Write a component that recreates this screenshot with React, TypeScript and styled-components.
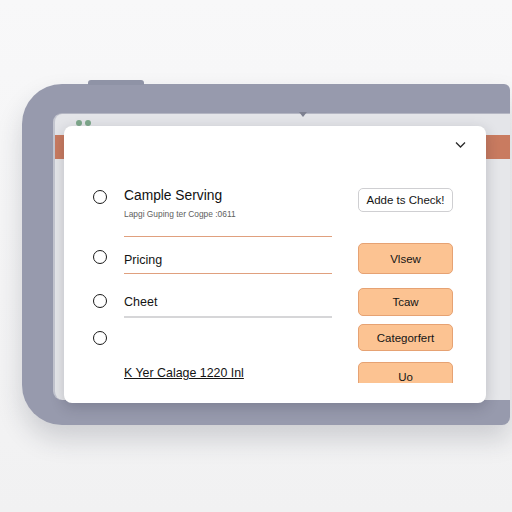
import styled, { createGlobalStyle } from 'styled-components';

const GlobalStyle = createGlobalStyle`
  html, body {
    margin: 0;
    padding: 0;
    background: #f5f5f6;
    font-family: 'Liberation Sans', Arial, sans-serif;
  }
`;

const Page = styled.div`
  width: 512px;
  height: 512px;
  padding: 84px 0 0 22px;
  box-sizing: border-box;
  overflow: hidden;
  background: linear-gradient(#f8f8f9, #f1f1f2);
`;

const Device = styled.div`
  position: relative;
  display: flex;
  width: 488px;
  height: 341px;
  box-sizing: border-box;
  padding: 29px 0 25px 31px;
  background: #979aad;
  border-radius: 40px 6px 8px 40px;
  box-shadow: 0 14px 26px rgba(40, 44, 60, 0.18);

  /* side button on the top edge */
  &::before {
    content: '';
    position: absolute;
    top: -4px;
    left: 66px;
    width: 56px;
    height: 5px;
    border-radius: 3px 3px 0 0;
    background: #8f93a6;
  }
`;

const Screen = styled.div`
  position: relative;
  flex: 1;
  display: flex;
  flex-direction: column;
  border-radius: 9px 0 0 9px;
  border-top: 1px solid #b4b6c3;
  border-left: 2px solid #c4c6d0;
  background: linear-gradient(
    to bottom,
    #e4e5e9 21px,
    #c97b60 21px,
    #c97b60 45px,
    #e6e7ea 45px
  );

  /* camera notch */
  &::before {
    content: '';
    position: absolute;
    top: -2px;
    left: 244px;
    border-left: 4px solid transparent;
    border-right: 4px solid transparent;
    border-top: 5px solid #7d8090;
  }
`;

const StatusDots = styled.div`
  display: flex;
  gap: 3px;
  height: 12px;
  box-sizing: border-box;
  padding: 6px 0 0 21px;
`;

const Dot = styled.span`
  width: 6px;
  height: 6px;
  border-radius: 50%;
  background: #7ea88b;
`;

const Card = styled.div`
  width: 422px;
  height: 277px;
  margin-left: 9px;
  box-sizing: border-box;
  background: #fff;
  border-radius: 8px;
  box-shadow: 0 4px 14px rgba(30, 34, 50, 0.22);
  padding-bottom: 20px;
`;

const Header = styled.div`
  display: flex;
  justify-content: flex-end;
  height: 62px;
  box-sizing: border-box;
  padding: 15px 20px 0 0;
`;

const Body = styled.div`
  height: 195px;
  overflow: hidden;
  padding-left: 29px;
`;

const Row = styled.div<{ $h: number; $gap: number }>`
  display: grid;
  grid-template-columns: 31px 234px 95px;
  height: ${(p) => p.$h}px;
  margin-top: ${(p) => p.$gap}px;
`;

const Radio = styled.span<{ $top: number }>`
  width: 14px;
  height: 14px;
  box-sizing: border-box;
  margin-top: ${(p) => p.$top}px;
  border: 1.6px solid #1a1a1a;
  border-radius: 50%;
`;

const Field = styled.div<{ $line?: 'orange' | 'grey'; $pad: number }>`
  width: 208px;
  box-sizing: border-box;
  padding-top: ${(p) => p.$pad}px;
  border-bottom: ${(p) =>
    p.$line === 'orange'
      ? '1.5px solid #e0a07e'
      : p.$line === 'grey'
      ? '2px solid #d6d6d8'
      : 'none'};
`;

const Title = styled.div`
  font-size: 13.8px;
  line-height: 16px;
  color: #111;
`;

const Sub = styled.div`
  margin-top: 5px;
  font-size: 8.4px;
  line-height: 10px;
  color: #5e5e5e;
`;

const Label = styled.div`
  font-size: 12.5px;
  line-height: 15px;
  color: #141414;
`;

const FooterLink = styled.a`
  font-size: 12.4px;
  line-height: 15px;
  color: #141414;
  text-decoration: underline;
`;

const Button = styled.div<{ $variant?: 'plain' | 'accent'; $h: number }>`
  display: flex;
  align-items: center;
  justify-content: center;
  height: ${(p) => p.$h}px;
  box-sizing: border-box;
  border-radius: 5px;
  font-size: 11.5px;
  color: #151515;
  background: ${(p) => (p.$variant === 'plain' ? '#fff' : '#fcc392')};
  border: 1px solid ${(p) => (p.$variant === 'plain' ? '#cfcfd2' : '#e6a273')};
`;

const Chevron = () => (
  <svg width="11" height="8" viewBox="0 0 11 8">
    <polyline points="1,1.5 5.5,6 10,1.5" fill="none" stroke="#2a2a2a" strokeWidth="1.3" />
  </svg>
);

export default function App() {
  return (
    <>
      <GlobalStyle />
      <Page>
        <Device>
          <Screen>
            <StatusDots>
              <Dot />
              <Dot />
            </StatusDots>
            <Card>
              <Header>
                <Chevron />
              </Header>
              <Body>
                <Row $h={49} $gap={0}>
                  <Radio $top={2} />
                  <Field $line="orange" $pad={0}>
                    <Title>Cample Serving</Title>
                    <Sub>Lapgi Guping ter Cogpe :0611</Sub>
                  </Field>
                  <Button $variant="plain" $h={24}>Adde ts Check!</Button>
                </Row>
                <Row $h={31} $gap={6}>
                  <Radio $top={7} />
                  <Field $line="orange" $pad={10}>
                    <Label>Pricing</Label>
                  </Field>
                  <Button $variant="accent" $h={31}>Vlsew</Button>
                </Row>
                <Row $h={30} $gap={14}>
                  <Radio $top={6} />
                  <Field $line="grey" $pad={7}>
                    <Label>Cheet</Label>
                  </Field>
                  <Button $variant="accent" $h={28}>Tcaw</Button>
                </Row>
                <Row $h={27} $gap={6}>
                  <Radio $top={7} />
                  <Field $pad={0} />
                  <Button $variant="accent" $h={27}>Categorfert</Button>
                </Row>
                <Row $h={30} $gap={11}>
                  <span />
                  <Field $pad={1}>
                    <FooterLink>K Yer Calage 1220 Inl</FooterLink>
                  </Field>
                  <Button $variant="accent" $h={30}>Uo</Button>
                </Row>
              </Body>
            </Card>
          </Screen>
        </Device>
      </Page>
    </>
  );
}
